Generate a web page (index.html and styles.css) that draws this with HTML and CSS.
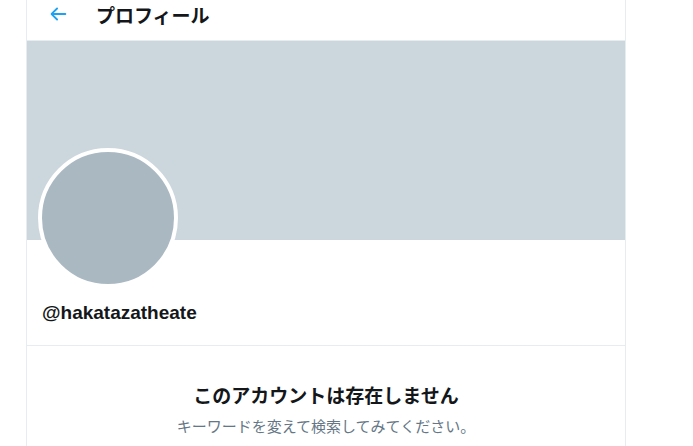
FILE: index.html
```html
<!DOCTYPE html>
<html lang="ja">
<head>
    <meta charset="UTF-8">
    <title>プロフィール</title>
    <link rel="stylesheet" href="styles.css">
</head>
<body>
    <div class="column">
        <div class="header">
            <svg class="back" viewBox="0 0 24 24" width="22" height="22">
                <path d="M20 11H7.414l4.293-4.293a1 1 0 0 0-1.414-1.414l-6 6a1 1 0 0 0 0 1.414l6 6a1 1 0 0 0 1.414-1.414L7.414 13H20a1 1 0 1 0 0-2z" fill="#1da1f2"/>
            </svg>
            <h1 class="title">プロフィール</h1>
        </div>

        <div class="banner"></div>

        <div class="profile">
            <div class="avatar"></div>
            <div class="username">@hakatazatheate</div>
        </div>

        <div class="empty">
            <h2>このアカウントは存在しません</h2>
            <p>キーワードを変えて検索してみてください。</p>
        </div>
    </div>
</body>
</html>
```
FILE: styles.css
```css
body {
    margin: 0;
    background-color: #fff;
    font-family: 'Noto Sans CJK JP', 'Noto Sans', sans-serif;
    color: #14171a;
}

.column {
    width: 598px;
    margin-left: 26px;
    min-height: 446px;
    border-left: 1px solid #e6ecf0;
    border-right: 1px solid #e6ecf0;
}

/* header is scrolled up a little, so content sits near the top */
.header {
    display: flex;
    align-items: center;
    height: 28px;
    padding: 0 0 12px 20px;
    border-bottom: 1px solid #e6ecf0;
}

.title {
    margin: 0 0 0 27px;
    font-size: 19px;
    font-weight: 700;
}

.banner {
    height: 199px;
    background-color: #ccd6dd;
}

.profile {
    display: flow-root;
    height: 105px;
    padding: 0 15px;
    border-bottom: 1px solid #e6ecf0;
}

.avatar {
    width: 132px;
    height: 132px;
    margin: -92px 0 0 -4px;
    border: 4px solid #fff;
    border-radius: 50%;
    background-color: #aab8c2;
}

.username {
    margin-top: 14px;
    font-family: 'Liberation Sans', Arial, sans-serif;
    font-size: 19px;
    line-height: 22px;
    font-weight: 700;
}

.empty {
    text-align: center;
    padding-top: 35px;
}

.empty h2 {
    margin: 0;
    font-size: 19px;
    font-weight: 700;
    line-height: 28px;
}

.empty p {
    margin: 6px 0 0;
    font-size: 15px;
    color: #657786;
}
```
